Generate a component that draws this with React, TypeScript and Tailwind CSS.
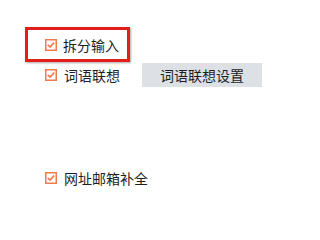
import React from "react";

function Check() {
  return (
    <svg width="12" height="12" viewBox="0 0 12 12" className="shrink-0 block">
      <rect x="0.75" y="0.75" width="10.5" height="10.5" fill="#fff" stroke="#f27b4d" strokeWidth="1.5" />
      <path d="M2.8 5.8 L5 8 L9.2 3.6" fill="none" stroke="#f27b4d" strokeWidth="1.7" />
    </svg>
  );
}

export default function App() {
  const font = { fontFamily: '"Noto Sans CJK SC", "Noto Sans", sans-serif' };
  return (
    <div className="w-[300px] h-[200px] bg-white overflow-hidden pt-[27px] pl-[25px] text-[14px] text-[#1e1e1e]" style={font}>
      <div className="w-[105px] h-[35px] border-[3px] border-[#e31d1a] shadow-[1px_1px_2px_rgba(0,0,0,0.35)] flex items-center pl-[17px]">
        <Check />
        <span className="ml-[6px] leading-[16px]">拆分输入</span>
      </div>
      <div className="flex items-center mt-[1px]">
        <div className="flex items-center pl-[20px]">
          <Check />
          <span className="ml-[7px] leading-[16px]">词语联想</span>
        </div>
        <div className="ml-[22px] w-[120px] h-[24px] bg-[#dde1e6] flex items-center justify-center leading-[16px]">
          词语联想设置
        </div>
      </div>
      <div className="flex items-center h-[16px] mt-[83px] pl-[20px]">
        <Check />
        <span className="ml-[7px] leading-[16px]">网址邮箱补全</span>
      </div>
    </div>
  );
}
